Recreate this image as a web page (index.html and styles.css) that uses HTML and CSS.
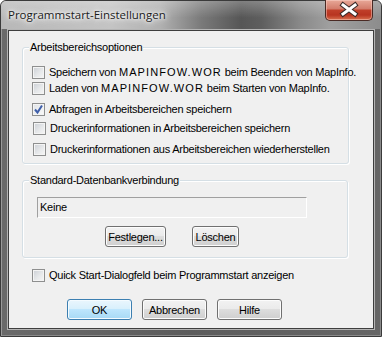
FILE: index.html
```html
<!DOCTYPE html>
<html lang="de">
<head>
  <meta charset="UTF-8">
  <title>Programmstart-Einstellungen</title>
  <link rel="stylesheet" href="styles.css">
</head>
<body>
  <div class="window">
    <!-- Title bar -->
    <div class="titlebar">
      <span class="title">Programmstart-Einstellungen</span>
      <span class="close">
        <svg width="46" height="20" viewBox="0 0 46 20">
          <path d="M17 5 L29 14 M29 5 L17 14" stroke="#3a2a28" stroke-width="5" stroke-linecap="square" fill="none"/>
          <path d="M17 5 L29 14 M29 5 L17 14" stroke="#ffffff" stroke-width="3" stroke-linecap="square" fill="none"/>
        </svg>
      </span>
    </div>

    <div class="client">
      <!-- Workspace options -->
      <div class="group group-options">
        <span class="group-title">Arbeitsbereichsoptionen</span>
        <div class="check-row row-1"><span class="box"></span><span>Speichern von <span class="caps">MAPINFOW.WOR</span> beim Beenden von MapInfo.</span></div>
        <div class="check-row row-2"><span class="box"></span><span>Laden von <span class="caps">MAPINFOW.WOR</span> beim Starten von MapInfo.</span></div>
        <div class="check-row row-3"><span class="box checked"><svg width="11" height="11" viewBox="0 0 11 11"><path d="M2 5.5 L4.5 8.5 L9 1.5" stroke="#3f5faa" stroke-width="2" fill="none"/></svg></span><span>Abfragen in Arbeitsbereichen speichern</span></div>
        <div class="check-row row-4 shifted"><span class="box"></span><span>Druckerinformationen in Arbeitsbereichen speichern</span></div>
        <div class="check-row row-5 shifted"><span class="box"></span><span>Druckerinformationen aus Arbeitsbereichen wiederherstellen</span></div>
      </div>

      <!-- Default database connection -->
      <div class="group group-db">
        <span class="group-title">Standard-Datenbankverbindung</span>
        <div class="textbox">Keine</div>
        <div class="db-buttons">
          <button class="btn btn-festlegen">Festlegen...</button>
          <button class="btn btn-loeschen">Löschen</button>
        </div>
      </div>

      <div class="check-row row-quick"><span class="box"></span><span>Quick Start-Dialogfeld beim Programmstart anzeigen</span></div>

      <div class="dialog-buttons">
        <button class="btn btn-default">OK</button>
        <button class="btn">Abbrechen</button>
        <button class="btn">Hilfe</button>
      </div>
    </div>
  </div>
</body>
</html>
```

FILE: styles.css
```css
/* Page */
body {
  margin: 0;
  width: 382px;
  height: 337px;
  overflow: hidden;
  background: #ffffff;
  font-family: 'Liberation Sans', Arial, sans-serif;
  font-size: 11px;
  letter-spacing: -0.25px;
  color: #000;
}

/* Window frame */
.window {
  width: 382px;
  height: 337px;
  box-sizing: border-box;
  padding: 0 7px 7px 7px;
  border: 1px solid #3a3a3a;
  border-radius: 6px 6px 0 0;
  background: linear-gradient(90deg, #6a6a6a, #5c5c5c 50%, #666 100%);
  box-shadow: inset 1px 1px 0 #9a9a9a, inset -1px -1px 0 #8a8a8a;
  display: flex;
  flex-direction: column;
}

.titlebar {
  height: 28px;
  margin: 0 -7px;
  padding: 0 8px 0 7px;
  display: flex;
  justify-content: space-between;
  align-items: flex-start;
  border-radius: 5px 5px 0 0;
  background:
    linear-gradient(180deg, rgba(255,255,255,0.25), rgba(255,255,255,0) 60%),
    linear-gradient(90deg, #b8b8b8 0, #c4c4c4 110px, #b0b0b0 160px, #7a7a7a 200px, #565656 240px, #5e5e5e 260px, #8a8a8a 300px, #a0a0a0 330px, #8c8c8c 381px);
}

.title {
  font-family: 'Open Sans', 'Noto Sans', sans-serif;
  font-size: 11.5px;
  letter-spacing: 0;
  color: #1b1b1b;
  margin-top: 6px;
  text-shadow: 0 0 6px #fff, 0 0 10px #fff, 0 0 3px #fff;
}

.close {
  width: 46px;
  height: 20px;
  margin-top: -1px;
  border: 1px solid #4a2a24;
  border-top: none;
  border-radius: 0 0 5px 5px;
  background: linear-gradient(180deg, #e8a898 0, #d27b6a 45%, #c0402a 50%, #b83420 75%, #d8704e 100%);
  box-shadow: inset 0 0 0 1px rgba(255,220,210,0.45);
}

.close svg {
  display: block;
}

/* Client area */
.client {
  flex: 1;
  background: #f0f0f0;
  border: 1px solid #3e3e3e;
  box-shadow: 0 0 0 1px #b4b4b4;
  margin-top: 1px;
  padding: 0 0 0 13px;
}

/* Group boxes */
.group {
  border: 1px solid #d5dfe5;
  border-radius: 3px;
  box-shadow: inset 1px 1px 0 #fff, 1px 1px 0 #fff;
  display: flex;
  flex-direction: column;
  align-items: flex-start;
}

.group-title {
  margin: -7px 0 0 6px;
  padding: 0 1px;
  line-height: 13px;
  background: #f0f0f0;
}

.group-options {
  width: 334px;
  margin-top: 16px;
  padding: 0 0 7px 0;
  width: 325px;
}

.group-options .check-row {
  margin-left: 9px;
}

.group-db {
  width: 324px;
  margin-top: 16px;
  padding: 0 0 10px 0;
}

/* Checkbox rows */
.check-row {
  display: flex;
  align-items: center;
  gap: 4px;
  height: 13px;
  line-height: 13px;
  white-space: nowrap;
}

.caps {
  letter-spacing: 1.1px;
}

.row-1 { margin-top: 12px; }
.row-2 { margin-top: 3px; }
.row-3 { margin-top: 8px; }
.row-4 { margin-top: 6px; }
.row-5 { margin-top: 8px; }

.group-options .shifted {
  margin-left: 10px;
}

.row-quick {
  margin: 11px 0 0 10px;
}

.box {
  width: 11px;
  height: 11px;
  flex: none;
  border: 1px solid #8e8f8f;
  background: linear-gradient(135deg, #cbcfd5 0, #e6e8ea 55%, #f6f6f6 100%);
  box-shadow: inset 0 0 0 1px #f4f4f4;
  display: flex;
  align-items: center;
  justify-content: center;
}

.box.checked {
  background: linear-gradient(135deg, #dfe3e8 0, #f0f1f2 60%, #fbfbfb 100%);
}

.box svg {
  display: block;
}

/* Connection text field */
.textbox {
  width: 266px;
  height: 19px;
  margin: 10px 0 0 14px;
  padding-left: 2px;
  line-height: 19px;
  border-top: 1px solid #a0a0a0;
  border-left: 1px solid #a0a0a0;
  border-bottom: 1px solid #ffffff;
  border-right: 1px solid #ffffff;
}

.db-buttons {
  display: flex;
  gap: 26px;
  margin: 8px 0 0 82px;
}

/* Buttons */
.btn {
  height: 21px;
  padding: 0;
  font-family: 'Liberation Sans', Arial, sans-serif;
  font-size: 11px;
  font-weight: normal;
  letter-spacing: -0.25px;
  color: #000;
  border: 1px solid #707070;
  border-radius: 3px;
  background: linear-gradient(180deg, #f2f2f2 0, #ebebeb 45%, #dddddd 50%, #cfcfcf 100%);
  box-shadow: inset 0 0 0 1px #fcfcfc;
}

.btn-festlegen {
  width: 61px;
}

.btn-loeschen {
  width: 47px;
}

.dialog-buttons {
  display: flex;
  gap: 10px;
  margin: 17px 0 0 45px;
}

.dialog-buttons .btn {
  width: 65px;
}

.btn-default {
  border-color: #3c7fb1;
  background: linear-gradient(180deg, #eaf6fd 0, #d9f0fc 45%, #bee6fd 50%, #a7d9f5 100%);
  box-shadow: inset 0 0 0 1px #f4fbff;
}
```
